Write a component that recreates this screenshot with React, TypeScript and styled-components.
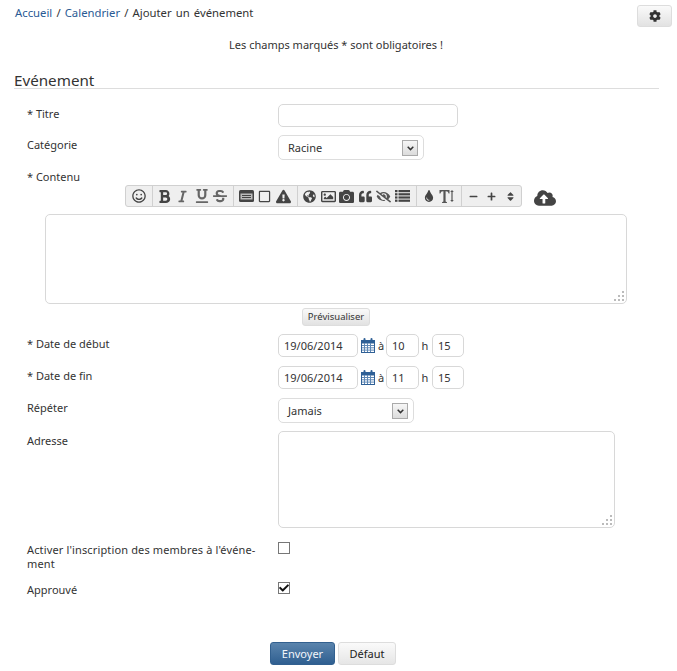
import { ReactNode } from 'react';
import styled, { createGlobalStyle } from 'styled-components';
import {
  FaBold, FaCamera, FaCheck, FaCloudUploadAlt, FaCog, FaExclamationTriangle,
  FaEyeSlash, FaGlobeAmericas, FaItalic, FaMinus, FaPlus, FaQuoteLeft,
  FaRegImage, FaRegSmile, FaRegSquare, FaSort, FaStrikethrough, FaTint, FaUnderline,
} from 'react-icons/fa';

const FONT = '"Noto Sans", "DejaVu Sans", sans-serif';

const GlobalStyle = createGlobalStyle`
  html, body {
    margin: 0;
    background: #fff;
    overflow: hidden;
  }
  body {
    font-family: ${FONT};
    font-size: 11px;
    color: #333;
  }
  * { box-sizing: border-box; }
`;

function CodeBox() {
  return (
    <svg width="15" height="12" viewBox="0 0 15 12">
      <rect x="0" y="0" width="15" height="12" rx="1.5" fill="#444" />
      <rect x="1.5" y="3.5" width="12" height="6" fill="#bbb" />
      <rect x="3" y="5" width="9" height="1" fill="#444" />
      <rect x="3" y="7" width="9" height="1" fill="#444" />
    </svg>
  );
}

function ListIcon() {
  return (
    <svg width="15" height="12" viewBox="0 0 15 12" fill="#444">
      {[0, 3.2, 6.4, 9.6].map((y) => (
        <g key={y}>
          <rect x="0" y={y} width="2.5" height="2.2" />
          <rect x="3.5" y={y} width="11.5" height="2.2" />
        </g>
      ))}
    </svg>
  );
}

function TextHeightIcon() {
  return (
    <svg width="16" height="15" viewBox="0 0 16 15">
      <path d="M0.5 1 H10.5 V4.5 H9.6 Q9.4 2.2 7 2.2 H6.6 V12.6 L8 13.3 V14 H3 V13.3 L4.4 12.6 V2.2 H4 Q1.6 2.2 1.4 4.5 H0.5 Z" fill="#555" />
      <path d="M13 1 L14.8 3 H13.6 V11 H14.8 L13 13 L11.2 11 H12.4 V3 H11.2 Z" fill="#555" />
    </svg>
  );
}

function CalendarGrid() {
  return (
    <svg width="14" height="15" viewBox="0 0 14 15">
      <rect x="0.5" y="2.5" width="13" height="12" fill="#fff" stroke="#2f6096" />
      <rect x="0.5" y="2.5" width="13" height="2.5" fill="#2f6096" stroke="#2f6096" />
      <path d="M3.5 5 V14 M6.5 5 V14 M9.5 5 V14 M1 7.5 H13 M1 9.8 H13 M1 12.1 H13" stroke="#5f88b5" strokeWidth="1" fill="none" />
      <rect x="2.5" y="0" width="2" height="4" rx="1" fill="#2f6096" />
      <rect x="9.5" y="0" width="2" height="4" rx="1" fill="#2f6096" />
    </svg>
  );
}

function Grip() {
  return (
    <GripMark width="11" height="11" viewBox="0 0 11 11">
      <g fill="#bbb">
        <rect x="8" y="0" width="2" height="2" />
        <rect x="4" y="4" width="2" height="2" />
        <rect x="8" y="4" width="2" height="2" />
        <rect x="0" y="8" width="2" height="2" />
        <rect x="4" y="8" width="2" height="2" />
        <rect x="8" y="8" width="2" height="2" />
      </g>
    </GripMark>
  );
}

function Select({ value, width }: { value: string; width: number }) {
  return (
    <SelectBox $width={width}>
      <SelectValue>{value}</SelectValue>
      <SelectArrow>
        <svg width="7" height="5" viewBox="0 0 7 5">
          <path d="M0.7 0.8 L3.5 3.6 L6.3 0.8" fill="none" stroke="#333" strokeWidth="1.5" />
        </svg>
      </SelectArrow>
    </SelectBox>
  );
}

function Row({ label, children, top, height, labelTop = 3 }: { label: ReactNode; children?: ReactNode; top: number; height: number; labelTop?: number }) {
  return (
    <FormRow $top={top} $height={height}>
      <RowLabel $top={labelTop}>{label}</RowLabel>
      <RowField>{children}</RowField>
    </FormRow>
  );
}

function DateTime({ date, hour, minute }: { date: string; hour: string; minute: string }) {
  return (
    <DateLine>
      <TextInput $width={80} defaultValue={date} />
      <CalendarIcon><CalendarGrid /></CalendarIcon>
      <Joiner $width={8}>à</Joiner>
      <TextInput $width={33} defaultValue={hour} />
      <Joiner $width={12}>h</Joiner>
      <TextInput $width={32} defaultValue={minute} />
    </DateLine>
  );
}

export default function App() {
  return (
    <Page>
      <GlobalStyle />
      <TopBar>
        <Breadcrumb>
          <a>Accueil</a> / <a>Calendrier</a> / Ajouter un événement
        </Breadcrumb>
        <GearButton><FaCog size={12} /></GearButton>
      </TopBar>
      <Notice>Les champs marqués * sont obligatoires !</Notice>
      <Legend>Evénement</Legend>

      <Row label="* Titre" top={15} height={23}>
        <TextInput $width={180} />
      </Row>
      <Row label="Catégorie" top={8} height={25}>
        <Select value="Racine" width={146} />
      </Row>

      <ContentLabel>* Contenu</ContentLabel>
      <ToolbarRow>
        <Toolbar>
          <ToolGroup>
            <Tool><FaRegSmile size={14} /></Tool>
          </ToolGroup>
          <ToolGroup>
            <Tool><FaBold size={15} /></Tool>
            <Tool><FaItalic size={13} color="#666" /></Tool>
            <Tool><FaUnderline size={14} color="#666" /></Tool>
            <Tool><FaStrikethrough size={14} color="#666" /></Tool>
          </ToolGroup>
          <ToolGroup>
            <Tool><CodeBox /></Tool>
            <Tool><FaRegSquare size={13} /></Tool>
            <Tool><FaExclamationTriangle size={15} /></Tool>
          </ToolGroup>
          <ToolGroup>
            <Tool><FaGlobeAmericas size={13} /></Tool>
            <Tool><FaRegImage size={15} /></Tool>
            <Tool><FaCamera size={15} /></Tool>
            <Tool><FaQuoteLeft size={13} /></Tool>
            <Tool><FaEyeSlash size={15} color="#555" /></Tool>
            <Tool><ListIcon /></Tool>
          </ToolGroup>
          <ToolGroup>
            <Tool><FaTint size={12} /></Tool>
            <Tool><TextHeightIcon /></Tool>
          </ToolGroup>
          <ToolGroup>
            <Tool><FaMinus size={9} /></Tool>
            <Tool><FaPlus size={9} /></Tool>
            <Tool><FaSort size={11} /></Tool>
          </ToolGroup>
        </Toolbar>
        <UploadIcon><FaCloudUploadAlt size={22} /></UploadIcon>
      </ToolbarRow>
      <EditorArea>
        <Grip />
      </EditorArea>
      <PreviewLine>
        <SmallButton>Prévisualiser</SmallButton>
      </PreviewLine>

      <Row label="* Date de début" top={8} height={23}>
        <DateTime date="19/06/2014" hour="10" minute="15" />
      </Row>
      <Row label="* Date de fin" top={9} height={23}>
        <DateTime date="19/06/2014" hour="11" minute="15" />
      </Row>
      <Row label="Répéter" top={9} height={25}>
        <Select value="Jamais" width={136} />
      </Row>
      <Row label="Adresse" top={8} height={97}>
        <AddressArea>
          <Grip />
        </AddressArea>
      </Row>
      <Row label={<LongLabel>Activer l'inscription des membres à l'événe-<br />ment</LongLabel>} top={14} height={28} labelTop={1}>
        <CheckBox />
      </Row>
      <Row label="Approuvé" top={11} height={14} labelTop={1}>
        <CheckBox><FaCheck size={10} color="#111" /></CheckBox>
      </Row>

      <Actions>
        <PrimaryButton>Envoyer</PrimaryButton>
        <DefaultButton>Défaut</DefaultButton>
      </Actions>
    </Page>
  );
}

const Page = styled.div`
  width: 677px;
  height: 671px;
  overflow: hidden;
`;

const TopBar = styled.div`
  display: flex;
  justify-content: space-between;
  padding: 5px 5px 0 15px;
`;

const Breadcrumb = styled.div`
  padding-top: 1px;
  line-height: 14px;
  font-size: 11.3px;
  word-spacing: 1.2px;
  a { color: #2a5a94; }
`;

const GearButton = styled.div`
  width: 35px;
  height: 22px;
  display: flex;
  align-items: center;
  justify-content: center;
  color: #333;
  border: 1px solid #ddd;
  border-radius: 3px;
  background: linear-gradient(#fafafa, #e2e2e2);
`;

const Notice = styled.div`
  margin-top: 11px;
  height: 14px;
  line-height: 14px;
  text-align: center;
  padding-right: 5px;
`;

const Legend = styled.div`
  margin: 19px 18px 0 14px;
  height: 18px;
  line-height: 18px;
  font-size: 15.2px;
  border-bottom: 1px solid #ddd;
`;

const FormRow = styled.div<{ $top: number; $height: number }>`
  display: flex;
  margin-top: ${(p) => p.$top}px;
  min-height: ${(p) => p.$height}px;
  padding-left: 27px;
`;

const RowLabel = styled.div<{ $top: number }>`
  width: 251px;
  line-height: 14px;
  padding-top: ${(p) => p.$top}px;
`;

const LongLabel = styled.span`
  letter-spacing: 0.14px;
`;

const RowField = styled.div`
  flex: 1;
`;

const TextInput = styled.input<{ $width: number }>`
  display: block;
  width: ${(p) => p.$width}px;
  height: 23px;
  padding: 0 5px;
  font-family: ${FONT};
  font-size: 11px;
  color: #333;
  border: 1px solid #d8d8d8;
  border-radius: 5px;
  background: #fff;
  outline: none;
`;

const SelectBox = styled.div<{ $width: number }>`
  position: relative;
  width: ${(p) => p.$width}px;
  height: 25px;
  padding: 0 9px;
  display: flex;
  align-items: center;
  border: 1px solid #ddd;
  border-radius: 5px;
`;

const SelectValue = styled.span`
  line-height: 14px;
`;

const SelectArrow = styled.div`
  position: absolute;
  top: 4px;
  right: 5px;
  width: 16px;
  height: 16px;
  display: flex;
  align-items: center;
  justify-content: center;
  border: 1px solid #aaa;
  background: linear-gradient(#f6f6f6, #dcdcdc);
`;

const ContentLabel = styled.div`
  margin: 10px 0 0 27px;
  height: 15px;
  line-height: 14px;
`;

const ToolbarRow = styled.div`
  display: flex;
  align-items: center;
  gap: 12px;
  margin: 0 0 0 125px;
`;

const Toolbar = styled.div`
  display: flex;
  height: 22px;
  border: 1px solid #d0d0d0;
  border-radius: 3px;
  background: #efefef;
  color: #444;
`;

const ToolGroup = styled.div`
  display: flex;
  align-items: center;
  padding: 0 4px 0 2.5px;
  border-right: 1px solid #d0d0d0;
  &:first-child { padding: 0 3.5px; }
  &:last-child { padding-right: 1px; border-right: 0; }
`;

const Tool = styled.span`
  width: 18.6px;
  display: flex;
  align-items: center;
  justify-content: center;
`;

const UploadIcon = styled.span`
  display: flex;
  color: #444;
  padding-top: 2px;
  margin-bottom: -2px;
`;

const GripMark = styled.svg`
  position: absolute;
  right: 1px;
  bottom: 1px;
`;

const EditorArea = styled.div`
  position: relative;
  width: 582px;
  height: 90px;
  margin: 7px 0 0 45px;
  border: 1px solid #d8d8d8;
  border-radius: 5px;
`;

const PreviewLine = styled.div`
  display: flex;
  justify-content: center;
  margin-top: 4px;
  padding-right: 5px;
`;

const SmallButton = styled.div`
  width: 68px;
  height: 18px;
  line-height: 16px;
  font-size: 9.5px;
  text-align: center;
  color: #333;
  border: 1px solid #ddd;
  border-radius: 3px;
  background: linear-gradient(#fafafa, #e2e2e2);
`;

const DateLine = styled.div`
  display: flex;
  align-items: center;
`;

const CalendarIcon = styled.span`
  display: flex;
  margin-left: 3px;
  width: 16px;
`;

const Joiner = styled.span<{ $width: number }>`
  width: ${(p) => p.$width}px;
  margin-right: 1px;
  text-align: center;
`;

const AddressArea = styled.div`
  position: relative;
  width: 337px;
  height: 97px;
  border: 1px solid #d8d8d8;
  border-radius: 5px;
`;

const CheckBox = styled.div`
  width: 12px;
  height: 12px;
  display: flex;
  align-items: center;
  justify-content: center;
  border: 1px solid #777;
  background: #fff;
`;

const Actions = styled.div`
  display: flex;
  gap: 3px;
  margin: 45px 0 0 270px;
`;

const PrimaryButton = styled.div`
  width: 65px;
  height: 23px;
  line-height: 21px;
  text-align: center;
  color: #f2f6fa;
  border: 1px solid #32608f;
  border-radius: 3px;
  background: linear-gradient(#5a84ad, #2f5f90);
`;

const DefaultButton = styled.div`
  width: 58px;
  height: 23px;
  line-height: 21px;
  text-align: center;
  color: #222;
  border: 1px solid #ddd;
  border-radius: 3px;
  background: linear-gradient(#fafafa, #e6e6e6);
`;
